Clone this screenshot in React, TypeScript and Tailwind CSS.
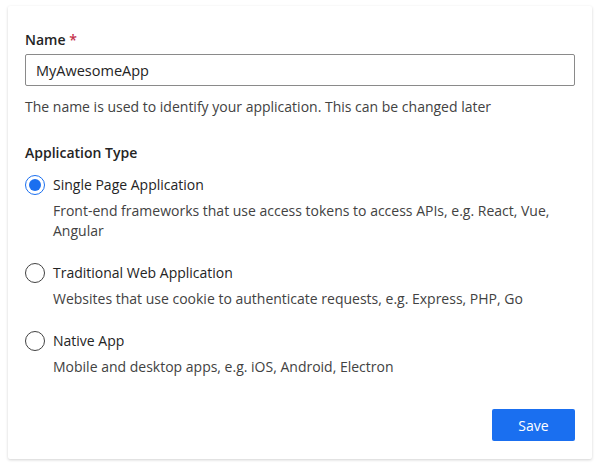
import { useState } from 'react';

const options = [
  {
    id: 'spa',
    label: 'Single Page Application',
    desc: 'Front-end frameworks that use access tokens to access APIs, e.g. React, Vue, Angular',
  },
  {
    id: 'web',
    label: 'Traditional Web Application',
    desc: 'Websites that use cookie to authenticate requests, e.g. Express, PHP, Go',
  },
  {
    id: 'native',
    label: 'Native App',
    desc: 'Mobile and desktop apps, e.g. iOS, Android, Electron',
  },
];

export default function App() {
  const [type, setType] = useState('spa');

  return (
    <div className="min-h-[467px] bg-white px-2 pt-[6px] font-['Open_Sans',sans-serif] text-[14px] text-[#242424]">
      <div className="flex w-[584px] flex-col rounded-[2px] bg-white px-[17px] pt-[23px] pb-[18px] shadow-[0_1px_3px_rgba(0,0,0,0.18)]">
        <label className="font-semibold text-[#242424]">
          Name <span className="text-[#c4314b]">*</span>
        </label>
        <input
          className="mt-[4px] h-[32px] rounded-[2px] border border-[#8a8a8a] px-[10px] text-[14.5px] text-[#242424] outline-none"
          defaultValue="MyAwesomeApp"
        />
        <p className="mt-[10px] text-[#424242]">
          The name is used to identify your application. This can be changed later
        </p>

        <div className="mt-[25px] font-semibold">Application Type</div>
        <div className="mt-[10px] flex flex-col gap-[20px]">
          {options.map((o) => (
            <div key={o.id} className="flex flex-col" onClick={() => setType(o.id)}>
              <div className="flex items-center gap-[8px]">
                <span
                  className={
                    type === o.id
                      ? 'flex h-[20px] w-[20px] items-center justify-center rounded-full border border-[#1a6ff0]'
                      : 'flex h-[20px] w-[20px] items-center justify-center rounded-full border border-[#424242]'
                  }
                >
                  {type === o.id && <span className="h-[12px] w-[12px] rounded-full bg-[#1a6ff0]" />}
                </span>
                <span className="leading-[24px]">{o.label}</span>
              </div>
              <div className="ml-[28px] mt-[4px] leading-[20px] text-[#424242]">{o.desc}</div>
            </div>
          ))}
        </div>

        <div className="mt-[32px] flex justify-end">
          <button className="h-[32px] w-[83px] rounded-[2px] bg-[#1a6ff0] text-[14px] font-medium text-white">
            Save
          </button>
        </div>
      </div>
    </div>
  );
}
